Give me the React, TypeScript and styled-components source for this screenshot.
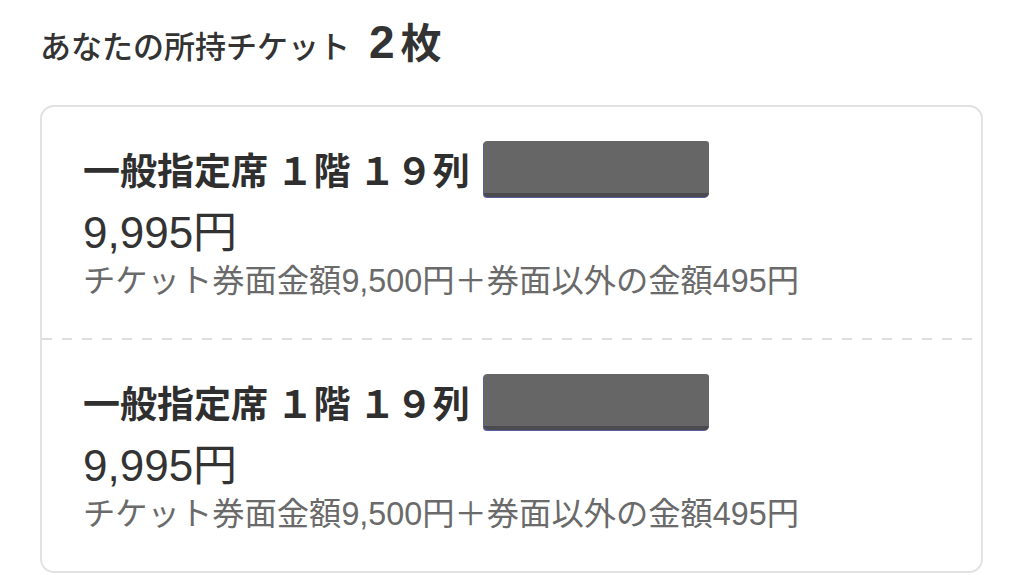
import React from "react";
import styled, { createGlobalStyle } from "styled-components";

const GlobalStyle = createGlobalStyle`
  html, body {
    margin: 0;
    padding: 0;
    background: #ffffff;
  }
  body {
    font-family: "Noto Sans CJK JP", "Noto Sans", sans-serif;
    color: #333333;
  }
`;

const latin = `"Liberation Sans", "Noto Sans CJK JP", sans-serif`;

const Page = styled.div`
  width: 1024px;
  height: 575px;
  box-sizing: border-box;
  padding: 10px 41px 0 40px;
  overflow: hidden;
`;

const Heading = styled.h1`
  display: flex;
  align-items: baseline;
  margin: 0;
  height: 60px;
  line-height: 60px;
  font-weight: 500;
  font-size: 31px;
  color: #333333;
`;

const Count = styled.span`
  margin-left: 19px;
  font-family: ${latin};
  font-size: 46px;
  font-weight: 700;
`;

const Unit = styled.span`
  font-size: 41px;
  font-weight: 700;
  margin-left: 6px;
`;

const Card = styled.section`
  margin-top: 35px;
  border: 2px solid #e2e2e2;
  border-radius: 14px;
  overflow: hidden;
`;

const Ticket = styled.div`
  padding: 34px 40px 39px 41px;
`;

const Divider = styled.div`
  height: 2px;
  background: repeating-linear-gradient(
    to right,
    #dedede 0,
    #dedede 10px,
    transparent 10px,
    transparent 20px
  );
`;

const SeatRow = styled.div`
  display: flex;
  align-items: center;
  height: 56px;
`;

const Seat = styled.span`
  font-size: 37px;
  font-weight: 700;
  color: #2f2f2f;
  white-space: pre;
`;

const Redacted = styled.span`
  display: block;
  width: 225px;
  height: 56px;
  margin-left: 14px;
  box-sizing: border-box;
  background: #666666;
  border-bottom: 4px solid #4b4b4f;
  border-radius: 3px 3px 4px 4px;
  box-shadow: -1px 1px 0 #5a5fa0;
`;

const Price = styled.div`
  margin-top: 6px;
  height: 60px;
  line-height: 60px;
  font-family: ${latin};
  font-size: 44px;
  font-weight: 400;
  color: #333333;
`;

const Breakdown = styled.div`
  height: 36px;
  line-height: 36px;
  font-family: ${latin};
  font-size: 32.3px;
  color: #6a6a6a;
  white-space: nowrap;
`;

type TicketInfo = {
  seat: string;
  price: string;
  breakdown: string;
};

const tickets: TicketInfo[] = [
  {
    seat: "一般指定席 １階 １９列",
    price: "9,995円",
    breakdown: "チケット券面金額9,500円＋券面以外の金額495円",
  },
  {
    seat: "一般指定席 １階 １９列",
    price: "9,995円",
    breakdown: "チケット券面金額9,500円＋券面以外の金額495円",
  },
];

function App() {
  return (
    <>
      <GlobalStyle />
      <Page>
        <Heading>
          あなたの所持チケット
          <Count>2</Count>
          <Unit>枚</Unit>
        </Heading>
        <Card>
          {tickets.map((t, i) => (
            <React.Fragment key={i}>
              {i > 0 && <Divider />}
              <Ticket>
                <SeatRow>
                  <Seat>{t.seat}</Seat>
                  <Redacted />
                </SeatRow>
                <Price>{t.price}</Price>
                <Breakdown>{t.breakdown}</Breakdown>
              </Ticket>
            </React.Fragment>
          ))}
        </Card>
      </Page>
    </>
  );
}

export default App;
